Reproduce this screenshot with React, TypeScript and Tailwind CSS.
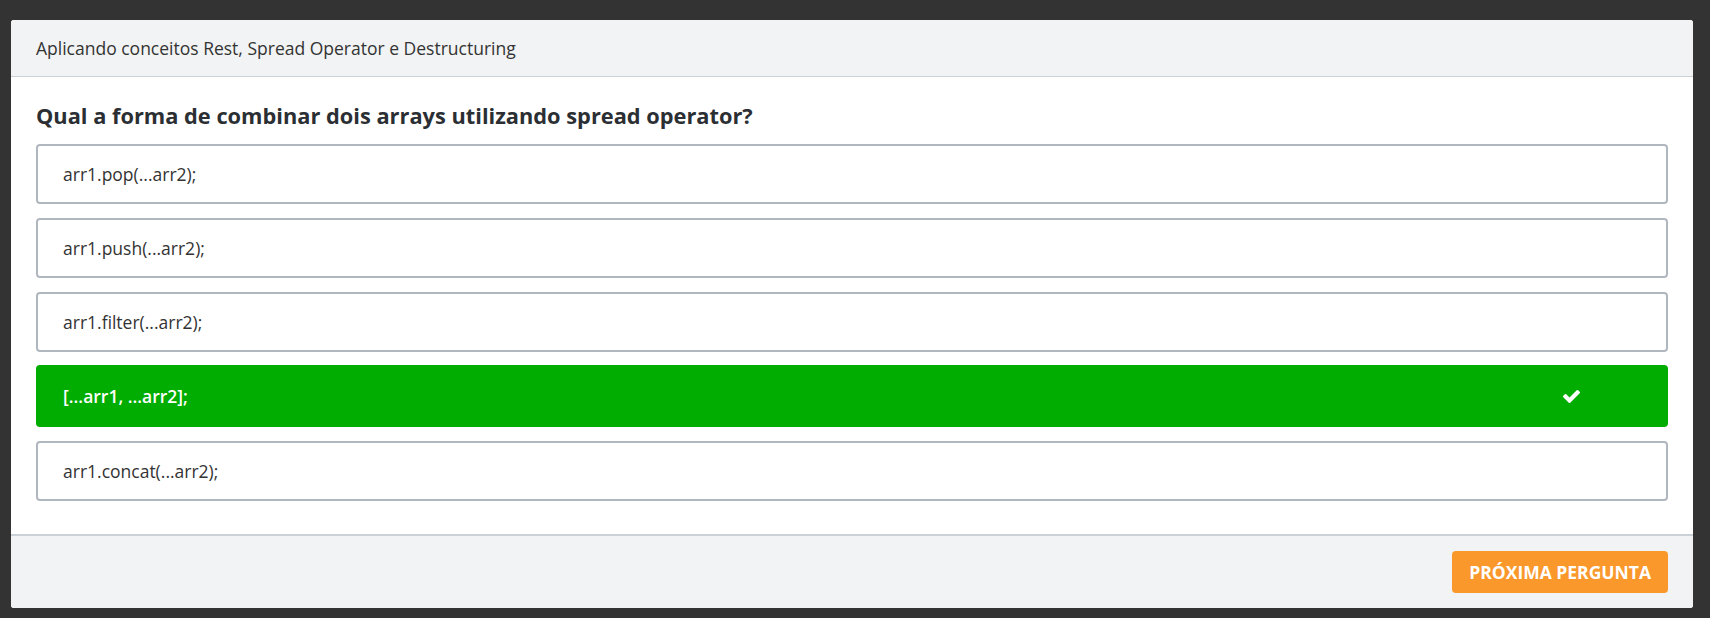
const options = [
  { text: 'arr1.pop(...arr2);', correct: false },
  { text: 'arr1.push(...arr2);', correct: false },
  { text: 'arr1.filter(...arr2);', correct: false },
  { text: '[...arr1, ...arr2];', correct: true },
  { text: 'arr1.concat(...arr2);', correct: false },
];

function CheckIcon() {
  return (
    <svg width="17" height="13" viewBox="121 334 1550 1188" fill="currentColor">
      <path d="M1671 566q0 40-28 68l-724 724-136 136q-28 28-68 28t-68-28l-136-136-362-362q-28-28-28-68t28-68l136-136q28-28 68-28t68 28l294 295 656-657q28-28 68-28t68 28l136 136q28 28 28 68z" />
    </svg>
  );
}

export default function App() {
  return (
    <div
      className="min-h-[618px] bg-[#333333] pt-[20px] pr-[17px] pb-[10px] pl-[11px] text-[#333333]"
      style={{ fontFamily: '"Open Sans", sans-serif' }}
    >
      <div className="flex flex-col overflow-hidden rounded-[3px] bg-white">
        {/* Header */}
        <div className="flex h-[57px] items-center border-b border-[#ccd1d6] bg-[#f2f3f4] px-[25px] text-[17.5px] text-[#333]">
          Aplicando conceitos Rest, Spread Operator e Destructuring
        </div>

        {/* Body */}
        <div className="px-[25px] pt-[23px] pb-[33px]">
          <h2 className="mb-[13px] text-[21.8px] leading-[31px] font-bold text-[#2b2f33]">
            Qual a forma de combinar dois arrays utilizando spread operator?
          </h2>
          <div className="flex flex-col gap-[14px]">
            {options.map((o) =>
              o.correct ? (
                <div
                  key={o.text}
                  className="-mt-[1px] flex h-[62px] items-center justify-between rounded-[4px] bg-[#00ad00] pr-[88px] pl-[27px] text-[17.5px] font-semibold text-white"
                >
                  <span>{o.text}</span>
                  <CheckIcon />
                </div>
              ) : (
                <div
                  key={o.text}
                  className="flex h-[60px] items-center rounded-[4px] border-2 border-[#b0b7bf] bg-white pl-[25px] text-[17.5px] text-[#333]"
                >
                  {o.text}
                </div>
              )
            )}
          </div>
        </div>

        {/* Footer */}
        <div className="flex h-[74px] items-center justify-end border-t-2 border-[#ccd1d6] bg-[#f2f3f4] pr-[25px]">
          <button className="h-[42px] rounded-[4px] bg-[#fa982c] px-[17px] text-[17.5px] font-bold text-white">
            PRÓXIMA PERGUNTA
          </button>
        </div>
      </div>
    </div>
  );
}
